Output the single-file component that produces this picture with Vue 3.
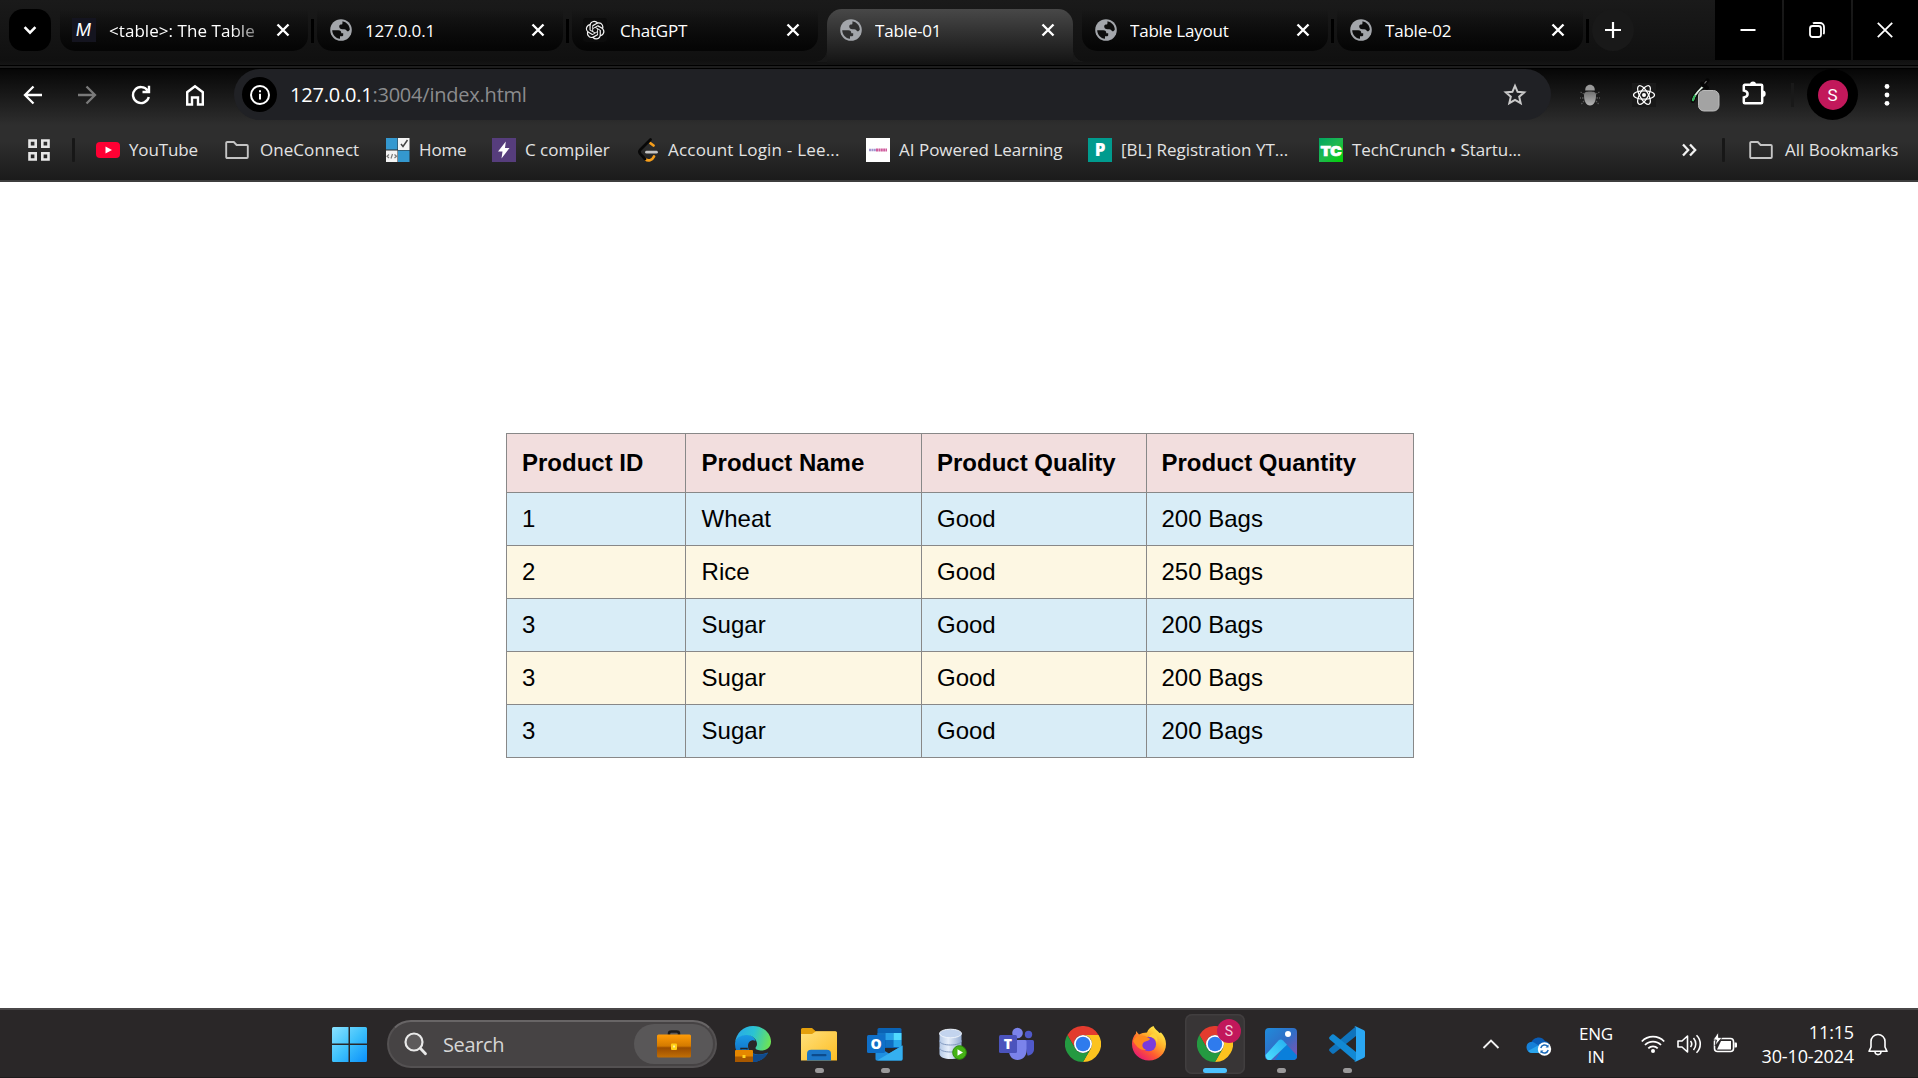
<script setup>
const tabs = [
  { title: '<table>: The Table', icon: 'mdn', fade: true },
  { title: '127.0.0.1', icon: 'globe' },
  { title: 'ChatGPT', icon: 'gpt' },
  { title: 'Table-01', icon: 'globe', active: true },
  { title: 'Table Layout', icon: 'globe' },
  { title: 'Table-02', icon: 'globe' },
]

const bookmarks = [
  { title: 'YouTube', icon: 'youtube' },
  { title: 'OneConnect', icon: 'folder' },
  { title: 'Home', icon: 'home' },
  { title: 'C compiler', icon: 'bolt' },
  { title: 'Account Login - Lee...', icon: 'leet' },
  { title: 'AI Powered Learning', icon: 'ai' },
  { title: '[BL] Registration YT...', icon: 'bl' },
  { title: 'TechCrunch • Startu...', icon: 'tc' },
]

const headers = ['Product ID', 'Product Name', 'Product Quality', 'Product Quantity']
const rows = [
  ['1', 'Wheat', 'Good', '200 Bags'],
  ['2', 'Rice', 'Good', '250 Bags'],
  ['3', 'Sugar', 'Good', '200 Bags'],
  ['3', 'Sugar', 'Good', '200 Bags'],
  ['3', 'Sugar', 'Good', '200 Bags'],
]

const apps = [
  { name: 'edge' },
  { name: 'files', state: 'open' },
  { name: 'outlook', state: 'open' },
  { name: 'database' },
  { name: 'teams' },
  { name: 'chrome' },
  { name: 'firefox' },
  { name: 'chrome', state: 'focused', badge: 'S' },
  { name: 'photos', state: 'open' },
  { name: 'code', state: 'open' },
]
</script>

<template>
  <div class="screen">
    <header class="tabstrip">
      <button class="tab-search">
        <svg width="16" height="16" viewBox="0 0 16 16" fill="none" stroke="#fff" stroke-width="2.6"><path d="M2.6 5.2 8 10.600l5.400-5.400" /></svg>
      </button>
      <template v-for="(tab, i) in tabs" :key="i">
        <div class="tab" :class="[tab.icon, { active: tab.active }]">
          <span class="favicon">
            <svg v-if="tab.icon === 'mdn'" width="24" height="24" viewBox="0 0 24 24">
              <rect width="24" height="24" fill="#14141f" />
              <text x="11.500" y="17.800" text-anchor="middle" font-family="Inter, sans-serif" font-style="italic" font-size="17" font-weight="400" fill="#fff">M</text>
            </svg>
            <svg v-else-if="tab.icon === 'gpt'" width="24" height="24" viewBox="0 0 24 24">
              <rect width="24" height="24" rx="3" fill="#0c0c0c" />
              <path transform="translate(2.800 2.800) scale(.78)" fill="#f2f2f2" d="M22.2819 9.8211a5.9847 5.9847 0 0 0-.5157-4.9108 6.0462 6.0462 0 0 0-6.5098-2.9A6.0651 6.0651 0 0 0 4.9807 4.1818a5.9847 5.9847 0 0 0-3.9977 2.9 6.0462 6.0462 0 0 0 .7427 7.0966 5.98 5.98 0 0 0 .511 4.9107 6.051 6.051 0 0 0 6.5146 2.9001A5.9847 5.9847 0 0 0 13.2599 24a6.0557 6.0557 0 0 0 5.7718-4.2058 5.9894 5.9894 0 0 0 3.9977-2.9001 6.0557 6.0557 0 0 0-.7475-7.0729zm-9.022 12.6081a4.4755 4.4755 0 0 1-2.8764-1.0408l.1419-.0804 4.7783-2.7582a.7948.7948 0 0 0 .3927-.6813v-6.7369l2.02 1.1686a.071.071 0 0 1 .038.052v5.5826a4.504 4.504 0 0 1-4.4945 4.4944zm-9.6607-4.1254a4.4708 4.4708 0 0 1-.5346-3.0137l.142.0852 4.783 2.7582a.7712.7712 0 0 0 .7806 0l5.8428-3.3685v2.3324a.0804.0804 0 0 1-.0332.0615L9.74 19.9502a4.4992 4.4992 0 0 1-6.1408-1.6464zM2.3408 7.8956a4.485 4.485 0 0 1 2.3655-1.9728V11.6a.7664.7664 0 0 0 .3879.6765l5.8144 3.3543-2.0201 1.1685a.0757.0757 0 0 1-.071 0l-4.8303-2.7865A4.504 4.504 0 0 1 2.3408 7.872zm16.5963 3.8558L13.1038 8.364 15.1192 7.2a.0757.0757 0 0 1 .071 0l4.8303 2.7913a4.4944 4.4944 0 0 1-.6765 8.1042v-5.6772a.79.79 0 0 0-.407-.667zm2.0107-3.0231l-.142-.0852-4.7735-2.7818a.7759.7759 0 0 0-.7854 0L9.409 9.2297V6.8974a.0662.0662 0 0 1 .0284-.0615l4.8303-2.7866a4.4992 4.4992 0 0 1 6.6802 4.66zM8.3065 12.863l-2.02-1.1638a.0804.0804 0 0 1-.038-.0567V6.0742a4.4992 4.4992 0 0 1 7.3757-3.4537l-.142.0805L8.704 5.459a.7948.7948 0 0 0-.3927.6813zm1.0976-2.3654l2.602-1.4998 2.6069 1.4998v2.9994l-2.5974 1.4997-2.6067-1.4997Z" />
            </svg>
            <svg v-else width="24" height="24" viewBox="0 0 24 24">
              <circle cx="12" cy="12" r="10.800" fill="#a3a6ab" />
              <path class="land" d="M3.200 12.300H9.300C11.500 12.300 12.300 13.300 12.300 15.200H14.200V17.300C14.200 18 13.400 18.300 12.600 18.300H11V20.800C6.600 20.500 3.300 16.600 3.200 12.300zM13.500 3.300C17.600 4 20.700 7.600 20.800 11.600 20 13.500 18.600 13.800 17.700 12.700 17.200 11.300 15.900 11.200 13.500 11.200 11.300 11.200 10.200 10.300 10.200 8.600 10.200 7.200 11 6.600 12.600 6.600 13.800 6.600 13.300 5 13.500 3.300z" />
            </svg>
          </span>
          <span class="tab-title" :class="{ fade: tab.fade }">{{ tab.title }}</span>
          <svg class="tab-close" width="14" height="14" viewBox="0 0 14 14" stroke="#fff" stroke-width="2.400"><path d="m1.500 1.500 11 11M12.500 1.500l-11 11" /></svg>
        </div>
        <span class="tab-gap" :class="{ blank: i === 2 || i === 3 }"></span>
      </template>
      <button class="new-tab">
        <svg width="16" height="16" viewBox="0 0 16 16" stroke="#fff" stroke-width="2.200"><path d="M8 0v16M0 8h16" /></svg>
      </button>
      <div class="window-controls">
        <span class="ctl"><svg width="16" height="16" viewBox="0 0 16 16" stroke="#fff" stroke-width="2"><path d="M.5 8h15" /></svg></span>
        <span class="ctl"><svg width="16" height="16" viewBox="0 0 16 16" fill="none" stroke="#fff" stroke-width="1.800"><rect x="1" y="4" width="11" height="11" rx="2.500" /><path d="M4 1.500C4.500 1 5 1 5.500 1H11a4 4 0 0 1 4 4v5.500c0 .6-.2 1.200-.6 1.600" /></svg></span>
        <span class="ctl last"><svg width="16" height="16" viewBox="0 0 16 16" stroke="#fff" stroke-width="1.800"><path d="m.8.800 14.400 14.400M15.200.8.800 15.200" /></svg></span>
      </div>
    </header>

    <div class="chrome-bars">
      <nav class="toolbar">
        <span class="nav-btn"><svg width="20" height="20" viewBox="0 0 20 20" fill="none" stroke="#fff" stroke-width="2.300"><path d="M19 10H2.500M10.500 1.500 2 10l8.500 8.500" /></svg></span>
        <span class="nav-btn"><svg width="20" height="20" viewBox="0 0 20 20" fill="none" stroke="#7a7a7a" stroke-width="2.300"><path d="M1 10h16.500M9.500 1.500 18 10l-8.500 8.500" /></svg></span>
        <span class="nav-btn"><svg width="20" height="20" viewBox="0 0 20 20" fill="none" stroke="#fff" stroke-width="2.400"><path d="M16.600 5.500A8 8 0 1 0 17.800 12M18 .8V7h-6.500" /></svg></span>
        <span class="nav-btn"><svg width="20" height="22" viewBox="0 0 20 22" fill="none" stroke="#fff" stroke-width="2.400"><path d="M2.200 20.500V8.200L10 2.200l7.800 6V20.500h-4.800V13.500H7v7z" /></svg></span>
        <div class="omnibox">
          <span class="site-info"><svg width="22" height="22" viewBox="0 0 22 22" fill="none" stroke="#fff" stroke-width="2"><circle cx="11" cy="11" r="9" /><path d="M11 9.800v5.700M11 6.200v2" /></svg></span>
          <span class="url"><b>127.0.0.1</b>:3004/index.html</span>
          <svg class="star" width="24" height="23" viewBox="0 0 24 23" fill="none" stroke="#c9c9c9" stroke-width="2"><path d="m12 2.800 2.600 6 6.600.6-5 4.300 1.500 6.500-5.700-3.400-5.700 3.400 1.500-6.500-5-4.300 6.600-.6z" /></svg>
        </div>
        <div class="extensions">
          <svg width="22" height="22" viewBox="0 0 22 22">
            <defs><linearGradient id="bug" x1="0" y1="0" x2="0" y2="1"><stop offset="0" stop-color="#707070" /><stop offset="1" stop-color="#b5b5b5" /></linearGradient></defs>
            <path d="M5 10 1.500 8M4.500 14H1M5 17l-3 3.500M17 10l3.500-2M17.500 14H21M17 17l3 3.500" stroke="#555" stroke-width="1.300" stroke-dasharray="1.500 1" />
            <path d="M6.200 6.500C6.200 3 8 .8 11 .8s4.800 2.200 4.800 5.700z" fill="#999" />
            <path d="M5 11c0-3 2-3.500 6-3.500s6 .5 6 3.500c0 6-2 10.500-6 10.500S5 17 5 11z" fill="url(#bug)" />
          </svg>
          <svg width="24" height="24" viewBox="0 0 24 24" fill="none" stroke="#fff" stroke-width="1.200">
            <rect width="24" height="24" fill="#191919" stroke="none" />
            <ellipse cx="12" cy="12" rx="10.500" ry="4.200" /><ellipse cx="12" cy="12" rx="10.500" ry="4.200" transform="rotate(60 12 12)" /><ellipse cx="12" cy="12" rx="10.500" ry="4.200" transform="rotate(120 12 12)" /><circle cx="12" cy="12" r="2" fill="#fff" stroke="none" />
          </svg>
          <svg width="32" height="36" viewBox="0 0 32 36">
            <path d="M3.800 22.800C5 17 9 14 14.500 8.500" stroke="#0a0a0a" stroke-width="4.500" stroke-linecap="round" fill="none" />
            <path d="M4 22.500C5 16.500 9 13.500 14 8.500" stroke="#dfeee3" stroke-width="1.800" fill="none" /><path d="M3.800 23.200c.3-2.500 1-4.200 2.500-6" stroke="#31b85a" stroke-width="2" fill="none" />
            <path d="m13 5.500 5 4.300M14.500 7.500l4-5.200" stroke="#050505" stroke-width="4" stroke-linecap="round" /><path d="m15.500 5.500 2-2.500" stroke="#777" stroke-width="1.200" />
            <rect x="9.500" y="12.500" width="20.500" height="20.500" rx="5.500" fill="#a3a3a3" stroke="#bababa" />
          </svg>
          <svg width="26" height="26" viewBox="0 0 26 26">
            <path d="M3.800 4.800H20.200a1 1 0 0 1 1 1V22.200a1 1 0 0 1-1 1H3.800a1 1 0 0 1-1-1V17.500c2.400-.5 3.800-1.700 3.800-3.500S5.200 11 2.800 10.500V5.800a1 1 0 0 1 1-1z" fill="none" stroke="#fff" stroke-width="2.500" /><path d="M9 4.500a3 3 0 0 1 6 0zM21.500 10.500a3.200 3.200 0 0 1 0 6.400z" fill="#fff" />
          </svg>
          <i class="ext-sep"></i>
          <span class="profile"><span>S</span></span>
          <svg width="6" height="24" viewBox="0 0 6 24" fill="#fff"><circle cx="3" cy="3.500" r="2.400" /><circle cx="3" cy="12" r="2.400" /><circle cx="3" cy="20.300" r="2.400" /></svg>
        </div>
      </nav>

      <nav class="bookmarks">
        <svg width="22" height="22" viewBox="0 0 22 22" fill="none" stroke="#e6e6e6" stroke-width="2.600"><path d="M1.500 1.500h6.200v6.200H1.500zM14.300 1.500h6.200v6.200h-6.200zM1.500 14.300h6.200v6.200H1.500zM14.300 14.300h6.200v6.200h-6.200z" /></svg>
        <i class="bar-sep"></i>
        <a v-for="bm in bookmarks" :key="bm.title" class="bookmark" :class="bm.icon">
          <svg v-if="bm.icon === 'youtube'" width="24" height="24" viewBox="0 0 24 24"><rect y="4" width="24" height="16" rx="4" fill="#ff0033" /><path d="m9.500 8.500 6.500 3.500-6.500 3.500z" fill="#fff" /></svg>
          <svg v-else-if="bm.icon === 'folder'" width="24" height="24" viewBox="0 0 24 24" fill="none" stroke="#c4c4c4" stroke-width="1.900"><path d="M1.200 19V5a1 1 0 0 1 1-1h6.600l2.800 3h10.200a1 1 0 0 1 1 1v11a1 1 0 0 1-1 1H2.200a1 1 0 0 1-1-1z" /></svg>
          <svg v-else-if="bm.icon === 'home'" width="24" height="24" viewBox="0 0 24 24"><path d="M0 0h11.500v11.500H0zM12 12.500h11.500V24H12z" fill="#3498cf" /><path d="M12 0h11.500v12H12zM0 12.500h11.500V24H0z" fill="#f4f4f4" /><path d="m15 6 2 2.500L21.500 2" fill="none" stroke="#444" stroke-width="1.500" /><path d="M3 16.500 1 18.200 3 20M8.500 16.500l2 1.700-2 1.800M6.500 16 5 20.500" fill="none" stroke="#777" stroke-width="1.200" /></svg>
          <svg v-else-if="bm.icon === 'bolt'" width="24" height="24" viewBox="0 0 24 24"><rect width="24" height="24" fill="#563d7c" /><path d="M13.800 3.500 6 13.500h4.500L9.500 20.500l8-10.500h-4.500z" fill="#fff" /></svg>
          <svg v-else-if="bm.icon === 'leet'" width="24" height="24" viewBox="0 0 24 24" fill="none" stroke-width="2.700" stroke-linecap="round"><path d="m16.500 7.500-3-2.300M17 18.500c-1.800 4-6 5-8.500 2.800" stroke="#f79f1b" /><path d="M13.500 1.500 3.300 11.800c-1 1-1 2.800 0 4L8 21" stroke="#080808" /><path d="M9.500 14.200h10" stroke="#c4c4c4" /></svg>
          <svg v-else-if="bm.icon === 'ai'" width="24" height="24" viewBox="0 0 24 24"><rect width="24" height="24" fill="#fff" /><path d="M3 12h7" stroke="#a396cf" stroke-width="2.500" stroke-dasharray="2 .4" /><path d="M10 12h11" stroke="#cf5c9d" stroke-width="3" stroke-dasharray="2 .4" /></svg>
          <svg v-else-if="bm.icon === 'bl'" width="24" height="24" viewBox="0 0 24 24"><rect width="24" height="24" fill="#009b8e" /><text x="12" y="18.300" text-anchor="middle" font-family="Open Sans, sans-serif" font-weight="800" font-size="17" fill="#fff">P</text></svg>
          <svg v-else width="24" height="24" viewBox="0 0 24 24">
            <defs><linearGradient id="tc" x1="0" y1="0" x2="1" y2="1"><stop offset="0" stop-color="#00a562" /><stop offset=".5" stop-color="#1fb84f" /><stop offset="1" stop-color="#00d301" /></linearGradient></defs>
            <rect width="24" height="24" fill="url(#tc)" /><text x="1.500" y="17.500" textLength="21" lengthAdjust="spacingAndGlyphs" font-family="Inter, sans-serif" font-weight="900" font-size="13.500" fill="#fff" stroke="#fff" stroke-width=".7">TC</text>
          </svg>
          <span>{{ bm.title }}</span>
        </a>
        <svg class="more" width="15" height="14" viewBox="0 0 15 14" fill="none" stroke="#f2f2f2" stroke-width="2.300"><path d="m1 1.500 5.200 5.500L1 12.500M8 1.500 13.200 7 8 12.500" /></svg>
        <i class="bar-sep"></i>
        <a class="bookmark">
          <svg width="24" height="24" viewBox="0 0 24 24" fill="none" stroke="#c4c4c4" stroke-width="1.900"><path d="M1.200 19V5a1 1 0 0 1 1-1h6.600l2.800 3h10.200a1 1 0 0 1 1 1v11a1 1 0 0 1-1 1H2.200a1 1 0 0 1-1-1z" /></svg>
          <span class="all">All Bookmarks</span>
        </a>
      </nav>
    </div>

    <main class="page">
      <table>
        <thead>
          <tr><th v-for="h in headers" :key="h">{{ h }}</th></tr>
        </thead>
        <tbody>
          <tr v-for="(row, i) in rows" :key="i"><td v-for="(cell, j) in row" :key="j">{{ cell }}</td></tr>
        </tbody>
      </table>
    </main>

    <footer class="taskbar">
      <svg class="start" width="35" height="35" viewBox="0 0 35 35">
        <defs><linearGradient id="win" x1="0" y1="0" x2="1" y2="1"><stop offset="0" stop-color="#8be2ff" /><stop offset=".5" stop-color="#3ec1fb" /><stop offset="1" stop-color="#0a8ffa" /></linearGradient></defs>
        <path d="M1.500 0H16.500V16.500H0V1.500Q0 0 1.500 0zM18 0H33.500Q35 0 35 1.500V16.500H18zM0 18H16.500V35H1.500Q0 35 0 33.500zM18 18H35V33.500Q35 35 33.500 35H18z" fill="url(#win)" />
      </svg>
      <div class="search">
        <svg width="24" height="24" viewBox="0 0 24 24" fill="none" stroke="#e9e9e9"><circle cx="10" cy="10" r="8.500" stroke-width="2.200" fill="#5d5a5b" /><path d="m16.300 16.300 5.200 5.500" stroke-width="2.800" stroke-linecap="round" /></svg>
        <span>Search</span>
        <div class="search-chip">
          <svg width="34" height="28" viewBox="0 0 34 28">
            <defs><linearGradient id="case" x1="0" y1="0" x2="0" y2="1"><stop offset="0" stop-color="#ff9c07" /><stop offset=".5" stop-color="#d47a00" /><stop offset=".58" stop-color="#9a4c00" /><stop offset="1" stop-color="#c26f05" /></linearGradient></defs>
            <path d="M12 5V3.500C12 2 13 1.500 14.500 1.500h5C21 1.500 22 2 22 3.500V5" fill="none" stroke="#1b1b1b" stroke-width="2.500" />
            <rect y="4.500" width="34" height="23" rx="1.500" fill="url(#case)" /><rect x="14" y="13.500" width="6" height="6.500" rx="1" fill="#ffcf16" /><rect x="16" y="15.500" width="2" height="2" fill="#fff0a0" />
          </svg>
        </div>
      </div>
      <div class="apps">
        <div v-for="(app, i) in apps" :key="i" class="app" :class="app.state">
          <svg v-if="app.name === 'edge'" width="36" height="36" viewBox="0 0 36 36">
            <defs>
              <linearGradient id="e1" x1="0" y1=".3" x2="1" y2=".5"><stop offset="0" stop-color="#28a8ea" /><stop offset=".5" stop-color="#2bc3d2" /><stop offset="1" stop-color="#6ce356" /></linearGradient>
              <linearGradient id="e2" x1="0" y1="0" x2="0" y2="1"><stop offset="0" stop-color="#1a9be6" /><stop offset="1" stop-color="#0c5fb8" /></linearGradient>
            </defs>
            <path d="M0 18C0 14 4 8.500 11 8.500c5 0 9 3 9.500 6.500-3-2-7.500 0-7.500 5 0 7 8 11 20 6.500C30 32 25 36 18 36 8 36 0 28 0 18z" fill="url(#e2)" />
            <path d="M16 27c4 2.500 11 2.300 17-.3C30 32 25 36 18 36z" fill="#114a8b" />
            <path d="M0 17C1 7 8.500 0 18 0c11 0 18 8 18 15.500 0 5.500-4 9-9 9-4 0-6.500-1-6.500-2.500 0-1 1.500-1.500 1.500-4 0-5-5-9-10.500-9C5 9 1 13 0 17z" fill="url(#e1)" />
            <rect y="24" width="18" height="12" rx="1" fill="#e58700" /><rect y="30.500" width="18" height="5.500" fill="#a85800" /><rect x="7.500" y="29" width="3" height="3" fill="#ffd21e" /><path d="M6 23.500v-1h6v1" stroke="#222" stroke-width="1.500" fill="none" />
          </svg>
          <svg v-else-if="app.name === 'files'" width="36" height="36" viewBox="0 0 36 36">
            <defs><linearGradient id="f1" x1="0" y1="0" x2="1" y2="1"><stop offset="0" stop-color="#ffe17c" /><stop offset="1" stop-color="#fdbd24" /></linearGradient></defs>
            <path d="M0 8V3.500Q0 2 1.500 2H11l4 3.500H34Q36 5.500 36 7v6H0z" fill="#e4a00c" /><path d="M0 8h11l4-2.800H34.500Q36 5.200 36 7v27.500H0z" fill="url(#f1)" />
            <path d="M6 34.500V28q0-4.200 4.200-4.200h15.600Q30 23.800 30 28v6.500z" fill="#1c77c8" /><rect x="10.500" y="28" width="15" height="2.200" rx="1" fill="#0c4b8c" />
          </svg>
          <svg v-else-if="app.name === 'outlook'" width="36" height="36" viewBox="0 0 36 36">
            <rect x="10.500" y="2" width="24" height="20" rx="1.500" fill="#0a62b4" /><path d="M10.500 7h8v7h-8z" fill="#1272c3" /><path d="M18.500 7h8v7h-8z" fill="#28a0e8" /><path d="M26.500 7h8v7h-8z" fill="#50d9ff" /><path d="M18.500 14h8v7h-8z" fill="#0f6fc2" /><path d="M26.500 14h8v7h-8z" fill="#28a8ea" />
            <path d="M8.500 19.500 22 27.500l13.500-8V33q0 1.500-1.500 1.500H10q-1.500 0-1.500-1.500z" fill="#1f8fe0" /><path d="M35.500 19.500 10 34.500h24q1.500 0 1.500-1.500z" fill="#35b0f0" />
            <rect x="0" y="9" width="18" height="18" rx="1.500" fill="#0f6fc8" /><text x="9" y="23" text-anchor="middle" font-family="Open Sans, sans-serif" font-size="14" font-weight="800" fill="#fff">O</text>
          </svg>
          <svg v-else-if="app.name === 'database'" width="36" height="36" viewBox="0 0 36 36">
            <defs><linearGradient id="db" x1="0" x2="1"><stop offset="0" stop-color="#b5c9e6" /><stop offset=".4" stop-color="#e6eefa" /><stop offset="1" stop-color="#95add2" /></linearGradient></defs>
            <path d="M6.500 7.500v20.500c0 3 5 5 11 5s11-2 11-5V7.500z" fill="url(#db)" /><ellipse cx="17.500" cy="7.500" rx="11" ry="4.300" fill="#c3d4ee" stroke="#eef4fc" stroke-width="1" /><path d="M6.500 14.500c0 3 5 4.500 11 4.500s11-1.500 11-4.500M6.500 21.500c0 3 5 4.500 11 4.500s11-1.500 11-4.500" fill="none" stroke="#8299bf" />
            <circle cx="26.500" cy="26.500" r="6.800" fill="#45b315" stroke="#2e8d0b" /><path d="m24.500 23.300 5.500 3.200-5.500 3.200z" fill="#fff" />
          </svg>
          <svg v-else-if="app.name === 'teams'" width="36" height="36" viewBox="0 0 36 36">
            <circle cx="29.500" cy="8.500" r="3.700" fill="#5059c9" /><circle cx="18.500" cy="7" r="5.300" fill="#7b83eb" /><path d="M25 14h8.500q1.500 0 1.500 1.500V23c0 4-3 6.500-6.500 6.500z" fill="#5059c9" /><path d="M10 14h16q1.500 0 1.500 1.500V25c0 5-4 9-9 9s-8.500-4-8.500-9z" fill="#7b83eb" />
            <rect x="0" y="9" width="18" height="18" rx="1.500" fill="#4b53bc" /><text x="9" y="23" text-anchor="middle" font-family="Open Sans, sans-serif" font-size="14" font-weight="800" fill="#fff">T</text>
          </svg>
          <svg v-else-if="app.name === 'chrome'" width="36" height="36" viewBox="0 0 48 48">
            <path d="M24 12H44.800A24 24 0 0 0 3.200 12L13.600 30A12 12 0 0 1 24 12z" fill="#e33b2e" /><path d="M44.800 12H24A12 12 0 0 1 34.400 30L24 48A24 24 0 0 0 44.800 12z" fill="#fcc31e" /><path d="M34.400 30L24 48A24 24 0 0 1 3.200 12L13.600 30A12 12 0 0 0 34.400 30z" fill="#249a41" /><circle cx="24" cy="24" r="12" fill="#fff" /><circle cx="24" cy="24" r="9.700" fill="#2f7bed" />
          </svg>
          <svg v-else-if="app.name === 'firefox'" width="36" height="36" viewBox="0 0 36 36">
            <defs><linearGradient id="ff" x1=".9" y1=".1" x2=".2" y2="1"><stop offset="0" stop-color="#fff44f" /><stop offset=".35" stop-color="#ffb02a" /><stop offset=".65" stop-color="#ff5a30" /><stop offset="1" stop-color="#e3127d" /></linearGradient></defs>
            <path d="M22.500 0c1 3 4 4.500 6 7l1.500-.5c3 3 5 7 5 11.500 0 9.500-7.500 16.500-17 16.500S1 27.500 1 18c0-4.500 1.500-8 4-10.500V5l3 3.500c2-1.300 5-2 8-2 1-3 3.500-5.500 6.500-6.500z" fill="url(#ff)" />
            <circle cx="17.800" cy="18" r="7.300" fill="#7a3bdc" /><path d="M2 15C4 10 9 8.500 14 10l5 2.800c-1 2.800-5.500 1.800-7 4.500-1.500 2.500 0 5.500 3 6.500C9 25 5 20 2 15z" fill="#ff8a1e" /><path d="M18 11c4-.5 7.500 2 8 6 1-4 0-8-3-10-2 1-4 2-5 4z" fill="#ffd23a" />
          </svg>
          <svg v-else-if="app.name === 'photos'" width="36" height="36" viewBox="0 0 36 36">
            <defs><linearGradient id="ph" x1="0" y1="0" x2="1" y2="1"><stop offset="0" stop-color="#1f8cdb" /><stop offset=".5" stop-color="#2f6ec6" /><stop offset="1" stop-color="#8a4fb0" /></linearGradient><linearGradient id="ph2" x1="0" y1="1" x2="1" y2="0"><stop offset="0" stop-color="#4fe0ff" /><stop offset="1" stop-color="#25aef0" /></linearGradient></defs>
            <rect x="2" y="2" width="32" height="32" rx="4" fill="url(#ph)" /><path d="m12 34 9.500-14.500q1.500-1.700 3 0L34 29.500V30q0 4-4 4z" fill="#0a7fdb" /><path d="M2.500 29 15.500 14.500q2.200-2 4.500 0l4 4.200L8 34H6q-3 0-3.500-5z" fill="url(#ph2)" /><circle cx="25" cy="8" r="3" fill="#fff" />
          </svg>
          <svg v-else width="36" height="36" viewBox="0 0 36 36">
            <path d="M.8 22.500 27 .3V10L5 27.500q-1 .6-2 0L.5 25q-1-1.300.3-2.500z" fill="#0f74bd" /><path d="M.8 13.500 27 35.700V26L5 8.500q-1-.6-2 0L.5 11q-1 1.300.3 2.500z" fill="#1289d4" /><path d="M26.500.3 35 4.200Q36 4.800 36 6V30q0 1.200-1 1.800l-8.500 3.900q-1 .4-1.700-.4 2.200 1 2.200-1.300V2Q27-.3 24.800.7q.7-.8 1.700-.4z" fill="#2aa7f3" />
          </svg>
          <span v-if="app.badge" class="badge">{{ app.badge }}</span>
          <i v-if="app.state" class="indicator"></i>
        </div>
      </div>
      <div class="tray">
        <svg class="up" width="18" height="12" viewBox="0 0 18 12" fill="none" stroke="#f2f2f2" stroke-width="1.900"><path d="M1.500 10 9 2.500l7.500 7.500" /></svg>
        <svg class="cloud" width="26" height="22" viewBox="0 0 26 22">
          <path d="M5 8C7 2.500 15 0 19 6c3 .5 5 2.500 5 5.500H4z" fill="#0a5cb5" /><path d="M.5 12C.5 8 4.500 6 8 7.500L20 15l-3 3H6c-3 0-5.500-2.500-5.500-6z" fill="#1580d8" /><path d="M2 16 12 10.500l9 5-2 2.500H6q-2.500 0-4-2z" fill="#2aa5ec" />
          <circle cx="18.500" cy="14" r="6.700" fill="#fff" /><path d="M14.800 13a4 4 0 0 1 7-1.500M22.200 15a4 4 0 0 1-7 1.500" stroke="#1567b8" stroke-width="1.500" fill="none" /><path d="M22.500 9.500v3h-3zM14.500 18.500v-3h3z" fill="#1567b8" />
        </svg>
        <div class="lang"><span>ENG</span><span>IN</span></div>
        <svg class="wifi" width="24" height="20" viewBox="0 0 24 20" fill="none" stroke="#fff" stroke-width="1.800"><path d="M.8 7.500a15.500 15.500 0 0 1 22.400 0M4 11a11 11 0 0 1 16 0M7.300 14.300a6.500 6.500 0 0 1 9.400 0" /><circle cx="12" cy="17" r="2" fill="#fff" stroke="none" /></svg>
        <svg class="sound" width="25" height="20" viewBox="0 0 25 20" fill="none" stroke="#fff" stroke-width="1.600"><path d="M1 7h4l5.500-5v16L5 13H1zM13.500 7c1.500 1.800 1.500 4.200 0 6M16.500 4c3 3.500 3 8.500 0 12M19.500 1.200c5 5 5 12.600 0 17.600" stroke-linejoin="round" /></svg>
        <svg class="battery" width="25" height="22" viewBox="0 0 25 22"><rect x="1.500" y="6.500" width="19" height="13" rx="3" fill="none" stroke="#fff" stroke-width="1.600" /><path d="M8 9h10v8.500H4z" fill="#fff" /><path d="M21.500 10.500h1.500q1 0 1 1v3q0 1-1 1h-1.500z" fill="#fff" /><path d="M5.500 0 0 8h3.500L2 14l7-8.500H5.500z" fill="#fff" stroke="#2a2728" stroke-width=".8" /></svg>
        <div class="clock"><span>11:15</span><span>30-10-2024</span></div>
        <svg class="bell" width="20" height="23" viewBox="0 0 20 23" fill="none" stroke="#fff" stroke-width="1.600"><path d="M1 18.300 3 14V8.500a7 7 0 0 1 14 0V14l2 4.300zM7 19c.5 3.500 5.500 3.500 6 0" stroke-linejoin="round" /></svg>
      </div>
    </footer>
  </div>
</template>

<style>
body { margin: 0; background: #fff; }
</style>

<style scoped>
.screen {
  width: 1918px;
  height: 1078px;
  display: flex;
  flex-direction: column;
  overflow: hidden;
  font-family: "Open Sans", "Noto Sans", sans-serif;
  color: #fff;
}
svg { display: block; flex: none; }
button { border: 0; padding: 0; margin: 0; }
* { box-sizing: border-box; }

.tabstrip {
  height: 69px;
  flex: none;
  display: flex;
  align-items: flex-start;
  padding-left: 9px;
  background:
    linear-gradient(#000, #000) 0 65px / 100% 1px no-repeat,
    linear-gradient(#1d1d1d, #1d1d1d) 0 66px / 100% 2px no-repeat,
    linear-gradient(#000, #000) 0 68px / 100% 1px no-repeat,
    linear-gradient(#1a1a1a, #101010 60px, #151515 65px);
}
.tab-search {
  width: 42px;
  height: 42px;
  margin: 9px 9px 0 0;
  border-radius: 14px;
  background: #000;
  display: grid;
  place-items: center;
}
.tab {
  width: 246px;
  height: 42px;
  margin-top: 9px;
  padding: 0 18px 0 12px;
  display: flex;
  align-items: center;
  border-radius: 0 0 15px 15px;
  background: linear-gradient(rgba(5, 5, 5, 0), #050505 95%);
  flex: none;
}
.tab.mdn { width: 248px; }
.tab.gpt { padding-left: 11px; }
.tab.active {
  height: 56px;
  padding-bottom: 14px;
  border-radius: 15px 15px 0 0;
  background: linear-gradient(#484848, #121212);
  position: relative;
}
.tab.active::before,
.tab.active::after {
  content: "";
  position: absolute;
  bottom: 3px;
  width: 12px;
  height: 12px;
}
.tab.active::before { left: -12px; background: radial-gradient(circle at 0 0, transparent 11.5px, #181818 12px); }
.tab.active::after { right: -12px; background: radial-gradient(circle at 100% 0, transparent 11.5px, #181818 12px); }
.land { fill: #0d0d0d; }
.active .land { fill: #303030; }
.tab-title {
  flex: 1;
  margin: 2px 10px 0 12px;
  font-size: 17px;
  line-height: 24px;
  letter-spacing: -0.2px;
  white-space: nowrap;
  overflow: hidden;
}
.gpt .tab-title { margin-left: 13px; }
.tab-title.fade {
  margin-left: 13px;
  letter-spacing: 0.05px;
  -webkit-mask-image: linear-gradient(90deg, #000 78%, rgba(0, 0, 0, .35) 97%);
  mask-image: linear-gradient(90deg, #000 78%, rgba(0, 0, 0, .35) 97%);
}
.tab-gap { width: 9px; height: 24px; margin-top: 19px; flex: none; background: linear-gradient(#000, #000) 3px 0 / 3px 100% no-repeat; }
.tab-gap.blank { background: none; }
.new-tab {
  width: 42px;
  height: 42px;
  margin-top: 9px;
  border-radius: 50%;
  background: #191919;
  display: grid;
  place-items: center;
}
.window-controls { margin-left: auto; display: flex; gap: 2px; }
.ctl { width: 67px; height: 60px; padding-right: 1px; background: #000; display: grid; place-items: center; }
.ctl.last { width: 65px; }

.chrome-bars {
  height: 113px;
  flex: none;
  background: linear-gradient(#060606, #2e2e2e 56px, #2e2e2e 72px, #1b1b1b 111px);
  border-bottom: 2px solid #3d3d3d;
}
.toolbar { height: 51px; display: flex; align-items: center; padding-left: 6px; }
.nav-btn { width: 54px; display: grid; place-items: center; }
.omnibox {
  width: 1317px;
  height: 51px;
  margin-left: 12px;
  padding: 0 24px 0 8px;
  border-radius: 26px;
  background: #202125;
  display: flex;
  align-items: center;
}
.site-info { width: 35px; height: 35px; border-radius: 50%; background: #000; display: grid; place-items: center; }
.url { flex: 1; margin-left: 13px; font-size: 20px; line-height: 28px; letter-spacing: -0.22px; color: #8b8c8e; }
.url b { font-weight: 400; color: #fff; }
.star { margin-bottom: 1px; }
.extensions { flex: 1; display: flex; align-items: center; padding-left: 28px; }
.extensions > :nth-child(2) { margin-left: 31px; }
.extensions > :nth-child(3) { margin-left: 33px; margin-top: 3px; }
.extensions > :nth-child(4) { margin-left: 20px; margin-bottom: 4px; }
.ext-sep { width: 3px; height: 24px; margin-left: 24px; background: #191919; }
.profile { width: 51px; height: 51px; margin-left: 13px; border-radius: 50%; background: #000; display: grid; place-items: center; }
.profile span { width: 30px; height: 30px; border-radius: 50%; background: #c2185b; font: 17px/30px Roboto, sans-serif; text-align: center; }
.profile + svg { margin-left: 26px; }

.bookmarks {
  height: 60px;
  padding-left: 28px;
  display: grid;
  align-items: center;
  grid-template-columns: 44px 24px 129px 161px 106px 145px 229px 222px 231px 363px 40px 27px 160px;
  font-size: 17px;
  line-height: 24px;
  letter-spacing: 0;
  color: #e3e3e3;
}
.bar-sep { width: 3px; height: 24px; background: #171717; border-radius: 1px; }
.bookmark { display: flex; align-items: center; gap: 9px; white-space: nowrap; }
.bookmark.youtube { letter-spacing: -0.15px; }
.bookmark.home { letter-spacing: -0.15px; }
.bookmark.folder { gap: 11px; letter-spacing: 0.05px; }
.bookmark.leet { gap: 7px; letter-spacing: 0.2px; }
.bookmark.tc { letter-spacing: -0.1px; }
.bookmark .all { margin-left: 3px; }

.page { height: 826px; flex: none; padding: 251px 0 0 506px; background: #fff; }
table {
  width: 908px;
  table-layout: fixed;
  border-collapse: separate;
  border-spacing: 0;
  border-top: 1px solid #888;
  border-left: 1px solid #888;
  font: 24px/28px "Liberation Sans", Arial, sans-serif;
  color: #000;
}
th, td { padding: 0 15px; text-align: left; border-right: 1px solid #888; border-bottom: 1px solid #888; }
th { height: 59px; background: #f2dede; font-weight: 700; }
th:nth-child(1) { width: 179px; }
th:nth-child(2) { width: 236px; }
th:nth-child(3) { width: 225px; }
th:nth-child(4) { width: 267px; }
th:nth-child(2), td:nth-child(2) { padding-left: 15.6px; }
th:nth-child(4), td:nth-child(4) { padding-left: 14.5px; }
td { height: 53px; background: #d9edf7; }
tbody tr:nth-child(even) td { background: #fdf7e3; }

.taskbar {
  height: 70px;
  flex: none;
  border-top: 2px solid #4a4748;
  background: linear-gradient(#2a2728 67px, #1d1b1c 67px);
  display: flex;
  align-items: center;
}
.start { margin-left: 332px; }
.search {
  width: 330px;
  height: 48px;
  margin: 0 3px 0 20px;
  padding: 0 3px 0 15px;
  border: 2px solid #545152;
  border-top-color: #686566;
  border-radius: 24px;
  background: #464344;
  display: flex;
  align-items: center;
  font-size: 20px;
  letter-spacing: -0.35px;
  color: #d6d6d6;
}
.search span { margin-left: 15px; }
.search-chip { width: 79px; height: 40px; margin-left: auto; margin-right: -1px; border-radius: 20px; background: #595758; display: grid; place-items: center; }
.apps { display: flex; }
.app { width: 66px; height: 60px; display: grid; place-items: center; position: relative; }
.app.focused { background: linear-gradient(#383536, #383536) 50% 50% / 60px 60px no-repeat; width: 60px; margin: 0 3px; border-radius: 7px; box-shadow: inset 0 0 0 1.5px #413e3f; }
.indicator { position: absolute; left: 50%; bottom: 1px; width: 9px; height: 5px; margin-left: -4.5px; border-radius: 3px; background: #9b999a; }
.focused .indicator { width: 24px; margin-left: -12px; background: #4cc2ff; }
.badge { position: absolute; left: 32px; top: 5px; width: 24px; height: 24px; border-radius: 50%; background: #c2185b; color: #f4cfdd; font: 14px/24px Roboto, sans-serif; text-align: center; }
.tray { flex: 1; display: flex; align-items: center; padding-left: 102px; font-size: 17px; line-height: 23px; }
.cloud { margin: 4px 0 0 26px; }
.lang { width: 44px; margin: 2px 0 0 22px; display: flex; flex-direction: column; align-items: center; letter-spacing: -0.2px; }
.wifi { margin-left: 23px; }
.sound { margin-left: 12px; }
.battery { margin-left: 11px; margin-bottom: 3px; }
.clock { width: 100px; margin-left: 16px; display: flex; flex-direction: column; align-items: flex-end; font-size: 18px; line-height: 24px; letter-spacing: -0.15px; }
.bell { margin-left: 14px; }
</style>
